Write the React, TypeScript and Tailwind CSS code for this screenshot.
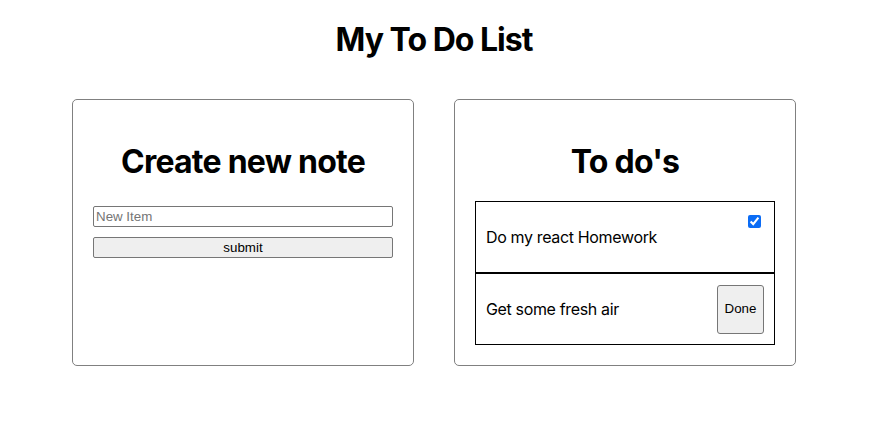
import React from "react";

export default function App() {
  return (
    <div className="min-h-[423px] bg-white text-black" style={{ fontFamily: "Inter, 'Noto Sans', sans-serif" }}>
      <div className="w-[724px] ml-[72px]">
        <h1 className="text-center text-[32px] font-bold leading-[39px] tracking-[-1px] pt-[20px] m-0">My To Do List</h1>
        <div className="flex items-stretch gap-[40px] mt-[40px]">
          <div className="w-[342px] border border-[#808080] rounded-[5px] p-[20px]">
            <h2 className="text-center text-[32px] font-bold leading-[39px] tracking-[-0.75px] mt-[22px] mb-[25px]">Create new note</h2>
            <input
              type="text"
              placeholder="New Item"
              className="block w-[300px] h-[21px] border border-[#767676] rounded-[2px] px-[2px] text-[13.33px] placeholder:text-[#757575] outline-none"
              style={{ fontFamily: "'Liberation Sans', Arial, sans-serif" }}
            />
            <button
              className="block w-[300px] h-[21px] mt-[10px] border border-[#767676] rounded-[2px] bg-[#efefef] text-[13.33px] leading-none"
              style={{ fontFamily: "'Liberation Sans', Arial, sans-serif" }}
            >
              submit
            </button>
          </div>
          <div className="w-[342px] border border-[#808080] rounded-[5px] p-[20px]">
            <h2 className="text-center text-[32px] font-bold leading-[39px] tracking-[-0.75px] mt-[22px] mb-[20px]">To do's</h2>
            <div className="w-[300px]">
              <div className="flex justify-between h-[72px] border border-black px-[10px] py-[10px]">
                <span className="self-center text-[16px] tracking-[-0.35px]">Do my react Homework</span>
                <input type="checkbox" defaultChecked className="w-[13px] h-[13px] mt-[3px] mr-[3px] accent-[#0b6cf5]" />
              </div>
              <div className="flex justify-between items-center h-[72px] border border-black px-[10px] py-[10px]">
                <span className="text-[16px] tracking-[-0.35px]">Get some fresh air</span>
                <button
                  className="w-[47px] h-[49px] border border-[#767676] rounded-[3px] bg-[#efefef] text-[13.33px]"
                  style={{ fontFamily: "'Liberation Sans', Arial, sans-serif" }}
                >
                  Done
                </button>
              </div>
            </div>
          </div>
        </div>
      </div>
    </div>
  );
}
